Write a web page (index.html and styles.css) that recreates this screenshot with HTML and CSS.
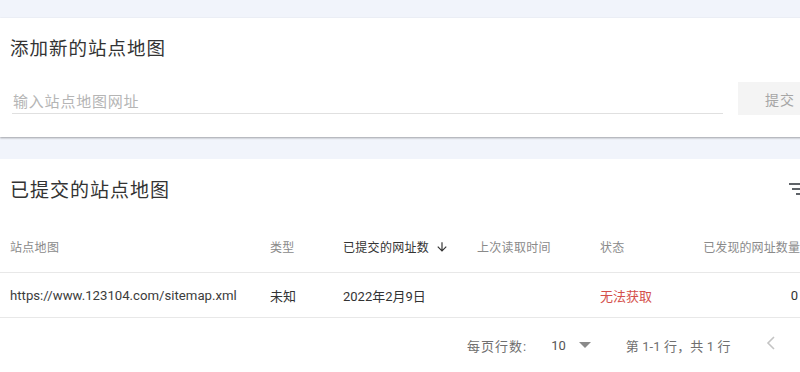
FILE: index.html
```html
<!DOCTYPE html>
<html lang="zh-CN">
<head>
<meta charset="utf-8">
<title>站点地图</title>
<link rel="stylesheet" href="styles.css">
</head>
<body>
<div class="page">
  <section class="card add-card">
    <h2 class="card-title">添加新的站点地图</h2>
    <div class="add-row">
      <div class="input-wrap"><span class="placeholder">输入站点地图网址</span></div>
      <button class="submit-btn">提交</button>
    </div>
  </section>

  <section class="card list-card">
    <div class="list-head">
      <h2 class="card-title">已提交的站点地图</h2>
      <svg class="filter-icon" width="24" height="24" viewBox="0 0 24 24"><path d="M10 18h4v-2h-4v2zM3 6v2h18V6H3zm3 7h12v-2H6v2z" fill="#5f6368"/></svg>
    </div>
    <div class="table">
      <div class="trow thead">
        <div class="c1">站点地图</div>
        <div class="c2">类型</div>
        <div class="c3 sorted">已提交的网址数
          <svg class="sort-icon" width="14" height="14" viewBox="0 0 24 24"><path d="M20 12l-1.41-1.41L13 16.17V4h-2v12.17l-5.58-5.59L4 12l8 8 8-8z" fill="#333"/></svg>
        </div>
        <div class="c4">上次读取时间</div>
        <div class="c5">状态</div>
        <div class="c6">已发现的网址数量</div>
      </div>
      <div class="trow tbody">
        <div class="c1 url">https://www.123104.com/sitemap.xml</div>
        <div class="c2">未知</div>
        <div class="c3">2022年2月9日</div>
        <div class="c4"></div>
        <div class="c5 err">无法获取</div>
        <div class="c6">0</div>
      </div>
    </div>
    <div class="pager">
      <span class="pg-label">每页行数:</span>
      <span class="pg-size">10</span>
      <svg class="pg-drop" width="12" height="6" viewBox="0 0 12 6"><path d="M0 0h12L6 6z" fill="#8a8a8a"/></svg>
      <span class="pg-range">第 1-1 行，共 1 行</span>
      <svg class="pg-prev" width="10" height="14" viewBox="0 0 10 14"><path d="M8 1L2 7l6 6" fill="none" stroke="#c4c4c4" stroke-width="1.6"/></svg>
    </div>
  </section>
</div>
</body>
</html>
```

FILE: styles.css
```css
html, body {
  margin: 0;
  padding: 0;
  overflow: hidden;
}
body {
  background: #f1f4fb;
  font-family: Roboto, "Noto Sans CJK SC", sans-serif;
  color: #333;
  width: 800px;
  height: 372px;
}
.page {
  width: 800px;
  height: 372px;
  overflow: hidden;
  padding-top: 18px;
  box-sizing: border-box;
}
.card {
  background: #fff;
  width: 860px;
  box-sizing: border-box;
}
.add-card {
  height: 119px;
  box-shadow: 0 1px 2px rgba(0,0,0,0.35);
  padding: 17px 0 0 10px;
}
.card-title {
  margin: 0;
  font-weight: 400;
  font-size: 18.5px;
  letter-spacing: 1px;
  line-height: 28px;
  color: #333;
}
.add-row {
  display: flex;
  align-items: flex-end;
  margin-top: 19px;
}
.input-wrap {
  width: 711px;
  margin-left: 2px;
  margin-bottom: 1px;
  border-bottom: 1px solid #e0e0e0;
  height: 26px;
  display: flex;
  align-items: center;
}
.placeholder {
  font-size: 15px;
  letter-spacing: 0.8px;
  color: #b5b5b5;
  padding-left: 1px;
}
.submit-btn {
  margin-left: 15px;
  width: 90px;
  height: 33px;
  border: none;
  background: #f4f4f4;
  color: #a6a6a6;
  font-family: inherit;
  font-size: 14px;
  letter-spacing: 1px;
  text-align: left;
  padding-left: 27px;
}
.list-card {
  margin-top: 22px;
  height: 260px;
  padding-left: 10px;
}
.list-head {
  display: flex;
  align-items: center;
  justify-content: space-between;
  height: 62px;
  padding-top: 1px;
  box-sizing: border-box;
  width: 800px;
}
.list-head .card-title {
  font-size: 19px;
}
.filter-icon {
  margin-top: -3px;
}
.table {
  width: 790px;
}
.trow {
  display: grid;
  grid-template-columns: 260px 73px 134px 123px 100px 100px;
  align-items: center;
  white-space: nowrap;
}
.thead {
  height: 51px;
  font-size: 12px;
  letter-spacing: 0.3px;
  color: #8a8a8a;
  border-bottom: 1px solid #e8e8e8;
  margin-left: -10px;
  padding-left: 10px;
}
.thead .sorted {
  color: #333;
  display: flex;
  align-items: center;
}
.sort-icon {
  margin-left: 6px;
}
.tbody {
  height: 44px;
  font-size: 13px;
  color: #333;
  border-bottom: 1px solid #e8e8e8;
  margin-left: -10px;
  padding-left: 10px;
}
.tbody .url {
  font-size: 13.2px;
  color: #3c3c3c;
}
.c6 {
  text-align: right;
  padding-right: 2px;
}
.thead .c6 {
  padding-right: 0;
  letter-spacing: 0.1px;
}
.err {
  color: #d4504b;
  font-size: 13px;
}
.pager {
  display: flex;
  align-items: center;
  height: 54px;
  padding-left: 457px;
  font-size: 13px;
  color: #6f6f6f;
}
.pg-label {
  letter-spacing: 1px;
}
.pg-size {
  margin-left: 24px;
  color: #555;
}
.pg-drop {
  margin-left: 13px;
}
.pg-range {
  margin-left: 35px;
  letter-spacing: 0.1px;
}
.pg-prev {
  margin-left: 35px;
  margin-top: -4px;
}
```
